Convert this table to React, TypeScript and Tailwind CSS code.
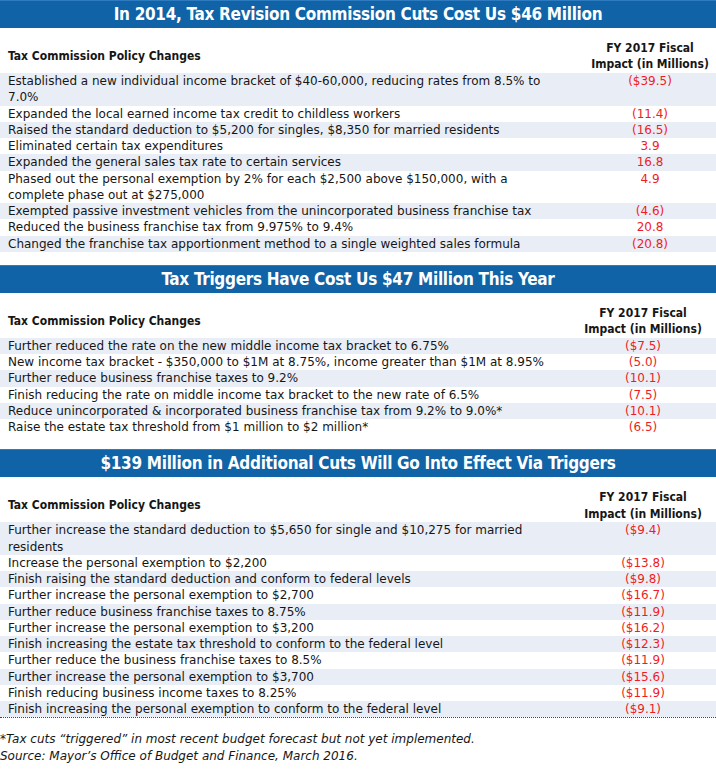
type Row = { lines: string[]; v: string };

const cuts2014: Row[] = [
  { lines: ["Established a new individual income bracket of $40-60,000, reducing rates from 8.5% to", "7.0%"], v: "($39.5)" },
  { lines: ["Expanded the local earned income tax credit to childless workers"], v: "(11.4)" },
  { lines: ["Raised the standard deduction to $5,200 for singles, $8,350 for married residents"], v: "(16.5)" },
  { lines: ["Eliminated certain tax expenditures"], v: "3.9" },
  { lines: ["Expanded the general sales tax rate to certain services"], v: "16.8" },
  { lines: ["Phased out the personal exemption by 2% for each $2,500 above $150,000, with a", "complete phase out at $275,000"], v: "4.9" },
  { lines: ["Exempted passive investment vehicles from the unincorporated business franchise tax"], v: "(4.6)" },
  { lines: ["Reduced the business franchise tax from 9.975% to 9.4%"], v: "20.8" },
  { lines: ["Changed the franchise tax apportionment method to a single weighted sales formula"], v: "(20.8)" },
];

const triggers: Row[] = [
  { lines: ["Further reduced the rate on the new middle income tax bracket to 6.75%"], v: "($7.5)" },
  { lines: ["New income tax bracket - $350,000 to $1M at 8.75%, income greater than $1M at 8.95%"], v: "(5.0)" },
  { lines: ["Further reduce business franchise taxes to 9.2%"], v: "(10.1)" },
  { lines: ["Finish reducing the rate on middle income tax bracket to the new rate of 6.5%"], v: "(7.5)" },
  { lines: ["Reduce unincorporated & incorporated business franchise tax from 9.2% to 9.0%*"], v: "(10.1)" },
  { lines: ["Raise the estate tax threshold from $1 million to $2 million*"], v: "(6.5)" },
];

const additional: Row[] = [
  { lines: ["Further increase the standard deduction to $5,650 for single and $10,275 for married", "residents"], v: "($9.4)" },
  { lines: ["Increase the personal exemption to $2,200"], v: "($13.8)" },
  { lines: ["Finish raising the standard deduction and conform to federal levels"], v: "($9.8)" },
  { lines: ["Further increase the personal exemption to $2,700"], v: "($16.7)" },
  { lines: ["Further reduce business franchise taxes to 8.75%"], v: "($11.9)" },
  { lines: ["Further increase the personal exemption to $3,200"], v: "($16.2)" },
  { lines: ["Finish increasing the estate tax threshold to conform to the federal level"], v: "($12.3)" },
  { lines: ["Further reduce the business franchise taxes to 8.5%"], v: "($11.9)" },
  { lines: ["Further increase the personal exemption to $3,700"], v: "($15.6)" },
  { lines: ["Finish reducing business income taxes to 8.25%"], v: "($11.9)" },
  { lines: ["Finish increasing the personal exemption to conform to the federal level"], v: "($9.1)" },
];

const condensed = { fontFamily: '"DejaVu Sans Condensed", "DejaVu Sans", sans-serif' };

function Section({ title, rows, wide, last }: { title: string; rows: Row[]; wide?: boolean; last?: boolean }) {
  const valCol = wide ? "w-[146px]" : "w-[132px]";
  return (
    <section>
      <div className="h-[28px] bg-[#0f63a6] border-t border-[#2f7bc0] flex items-center justify-center">
        <h2 className="text-white font-bold text-[17px] tracking-[-0.3px] leading-none" style={condensed}>
          {title}
        </h2>
      </div>
      <div className="flex items-center pt-[12px] pb-[0.5px] font-bold" style={condensed}>
        <div className="flex-1 pl-2">Tax Commission Policy Changes</div>
        <div className={`${valCol} text-center`}>
          <div>FY 2017 Fiscal</div>
          <div>Impact (in Millions)</div>
        </div>
      </div>
      <div className={last ? "border-b border-dotted border-[#1f4e8c]" : ""}>
        {rows.map((r, i) => (
          <div key={i} className={`flex items-start ${i % 2 === 0 ? "bg-[#e9eef6]" : "bg-white"}`}>
            <div className="flex-1 pl-2">
              {r.lines.map((l, j) => (
                <div key={j} className="whitespace-nowrap">{l}</div>
              ))}
            </div>
            <div className={`${valCol} text-center text-[#f01c24]`}>{r.v}</div>
          </div>
        ))}
      </div>
    </section>
  );
}

export default function App() {
  return (
    <div
      className="w-[716px] h-[771px] bg-white text-[#161616] text-[12px] leading-[16.25px] overflow-hidden"
      style={{ fontFamily: '"DejaVu Sans", sans-serif' }}
    >
      <Section title="In 2014, Tax Revision Commission Cuts Cost Us $46 Million" rows={cuts2014} />
      <div className="h-[13px]" />
      <Section title="Tax Triggers Have Cost Us $47 Million This Year" rows={triggers} wide />
      <div className="h-[14px]" />
      <Section title="$139 Million in Additional Cuts Will Go Into Effect Via Triggers" rows={additional} wide last />
      <div className="mt-[13px] italic leading-[17px]">
        <div>*Tax cuts “triggered” in most recent budget forecast but not yet implemented.</div>
        <div>Source: Mayor’s Office of Budget and Finance, March 2016.</div>
      </div>
    </div>
  );
}
